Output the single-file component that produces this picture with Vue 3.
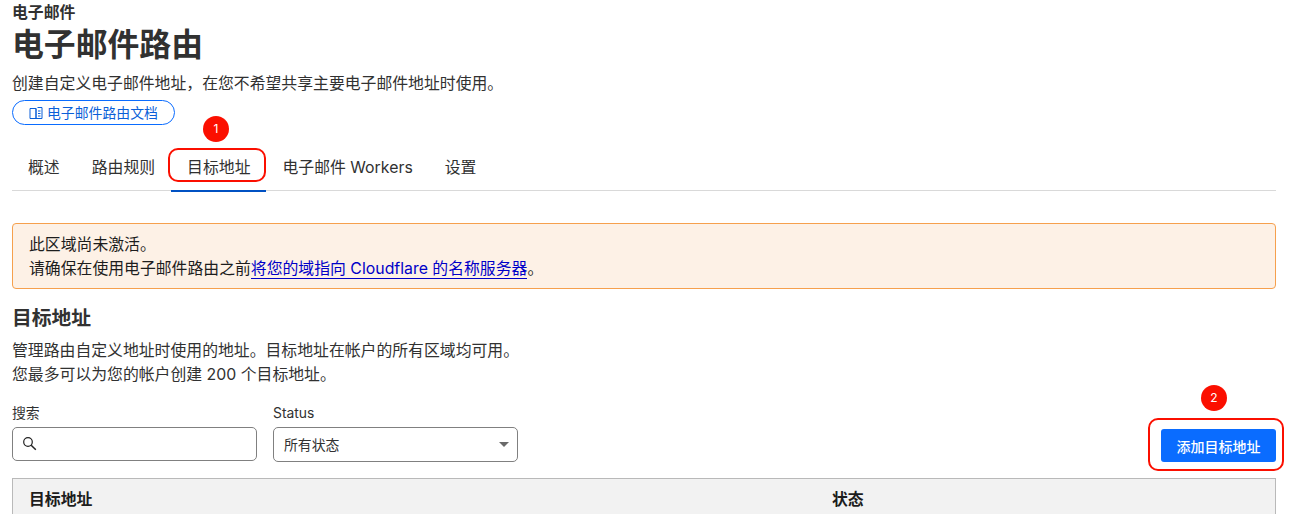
<template>
  <div class="page">
    <div class="crumb">电子邮件</div>
    <h1 class="title">电子邮件路由</h1>
    <p class="desc">创建自定义电子邮件地址，在您不希望共享主要电子邮件地址时使用。</p>
    <a class="doc">
      <svg class="book" width="14" height="14" viewBox="0 0 14 14" fill="none" stroke="#0a5fd8" stroke-width="1">
        <path d="M7 2.5H1v10h6z" />
        <path d="M7 2.5V12.5h6V1.5H8.5" />
        <path d="M9 5h2.5M9 7.5h2.5M9 10h2.5" />
      </svg>
      <span>电子邮件路由文档</span>
    </a>
    <nav class="tabs">
      <span v-for="tab in tabs" :key="tab" class="tab" :class="{ active: tab === '目标地址' }">{{ tab }}</span>
    </nav>
    <div class="alert">
      <div>此区域尚未激活。</div>
      <div>请确保在使用电子邮件路由之前<a class="link">将您的域指向 Cloudflare 的名称服务器</a>。</div>
    </div>
    <h2 class="section">目标地址</h2>
    <p class="sub">管理路由自定义地址时使用的地址。目标地址在帐户的所有区域均可用。<br />您最多可以为您的帐户创建 200 个目标地址。</p>
    <div class="filters">
      <label class="field">
        <span class="label">搜索</span>
        <span class="input search">
          <svg width="16" height="16" viewBox="0 0 16 16" fill="none" stroke="#222" stroke-width="1.2">
            <circle cx="6" cy="6" r="4.3" />
            <path d="M9.2 9.2l4.6 4.6" stroke-width="1.5" />
          </svg>
        </span>
      </label>
      <label class="field">
        <span class="label">Status</span>
        <span class="input select">
          <span>所有状态</span>
          <i class="caret"></i>
        </span>
      </label>
      <button class="add">添加目标地址</button>
    </div>
    <div class="thead">
      <div class="col-a">目标地址</div>
      <div>状态</div>
    </div>

    <i class="ring ring-one"></i>
    <i class="ring ring-two"></i>
    <b class="badge badge-one">1</b>
    <b class="badge badge-two">2</b>
  </div>
</template>

<script setup>
const tabs = ['概述', '路由规则', '目标地址', '电子邮件 Workers', '设置']
</script>

<style>
html, body { margin: 0; background: #fff; overflow: hidden; }
</style>

<style scoped>
.page {
  position: relative;
  box-sizing: border-box;
  width: 1289px;
  height: 514px;
  overflow: hidden;
  padding: 1px 13px 0 12px;
  color: #313131;
  font-family: Inter, "Noto Sans CJK SC", sans-serif;
  font-size: 15.85px;
  line-height: 24px;
}
.crumb { font-weight: 700; font-size: 15.85px; height: 24px; }
.title { margin: 0; font-size: 31.85px; line-height: 40px; font-weight: 700; }
.desc { margin: 7px 0 0; height: 24px; }
.doc {
  display: flex;
  align-items: center;
  gap: 4px;
  box-sizing: border-box;
  width: 163px;
  height: 25px;
  margin-top: 4px;
  padding-left: 16px;
  border: 1px solid #0a6cff;
  border-radius: 13px;
  color: #0a5fd8;
  font-size: 13.87px;
}
.tabs {
  display: flex;
  height: 66px;
  border-bottom: 1px solid #d9d9d9;
  box-sizing: border-box;
}
.tab {
  box-sizing: border-box;
  height: 67px;
  padding: 31px 16px 0;
}
.tab.active { border-bottom: 2px solid #0051c3; }
.alert {
  box-sizing: border-box;
  height: 66px;
  margin-top: 32px;
  padding: 9px 16px;
  border: 1px solid #f6a04d;
  border-radius: 4px;
  background: #fdf1e6;
  color: #1d1d1d;
}
.link { color: #0000c8; border-bottom: 1px solid #0000c8; }
.section { margin: 17px 0 0; font-size: 19.8px; line-height: 24px; font-weight: 700; }
.sub { margin: 9px 0 0; }
.filters {
  display: flex;
  align-items: flex-start;
  gap: 16px;
  margin-top: 16px;
}
.field { display: flex; flex-direction: column; width: 245px; }
.label { font-size: 13.87px; line-height: 20px; margin-bottom: 4px; }
.input {
  box-sizing: border-box;
  display: flex;
  align-items: center;
  height: 34px;
  border: 1px solid #808080;
  border-radius: 5px;
  background: #fff;
}
.search { padding-left: 9px; }
.select {
  justify-content: space-between;
  height: 35px;
  padding: 0 8px 0 10px;
  font-size: 13.87px;
}
.caret {
  width: 0;
  height: 0;
  border-left: 5px solid transparent;
  border-right: 5px solid transparent;
  border-top: 5px solid #6a6a6a;
}
.add {
  align-self: flex-end;
  height: 33px;
  width: 115px;
  margin-left: auto;
  border: 0;
  border-radius: 3px;
  background: #0a6cff;
  color: #fff;
  font: 500 14px Inter, "Noto Sans CJK SC", sans-serif;
}
.thead {
  box-sizing: border-box;
  display: flex;
  height: 50px;
  margin-top: 16px;
  padding: 9px 16px 0;
  border: 1px solid #b9b9b9;
  background: #f2f2f2;
  color: #1d1d1d;
  font-weight: 700;
}
.col-a { width: 803px; }
.ring {
  position: absolute;
  box-sizing: border-box;
  border: 2px solid #fb0f00;
  border-radius: 10px;
}
.ring-one { left: 168px; top: 148px; width: 98px; height: 34px; }
.ring-two { left: 1148px; top: 418px; width: 136px; height: 53px; }
.badge {
  position: absolute;
  width: 26px;
  height: 26px;
  border-radius: 50%;
  background: #fb0f00;
  color: #fff;
  font-size: 12px;
  font-weight: 400;
  line-height: 26px;
  text-align: center;
}
.badge-one { left: 203px; top: 116px; }
.badge-two { left: 1201px; top: 385px; }
</style>
